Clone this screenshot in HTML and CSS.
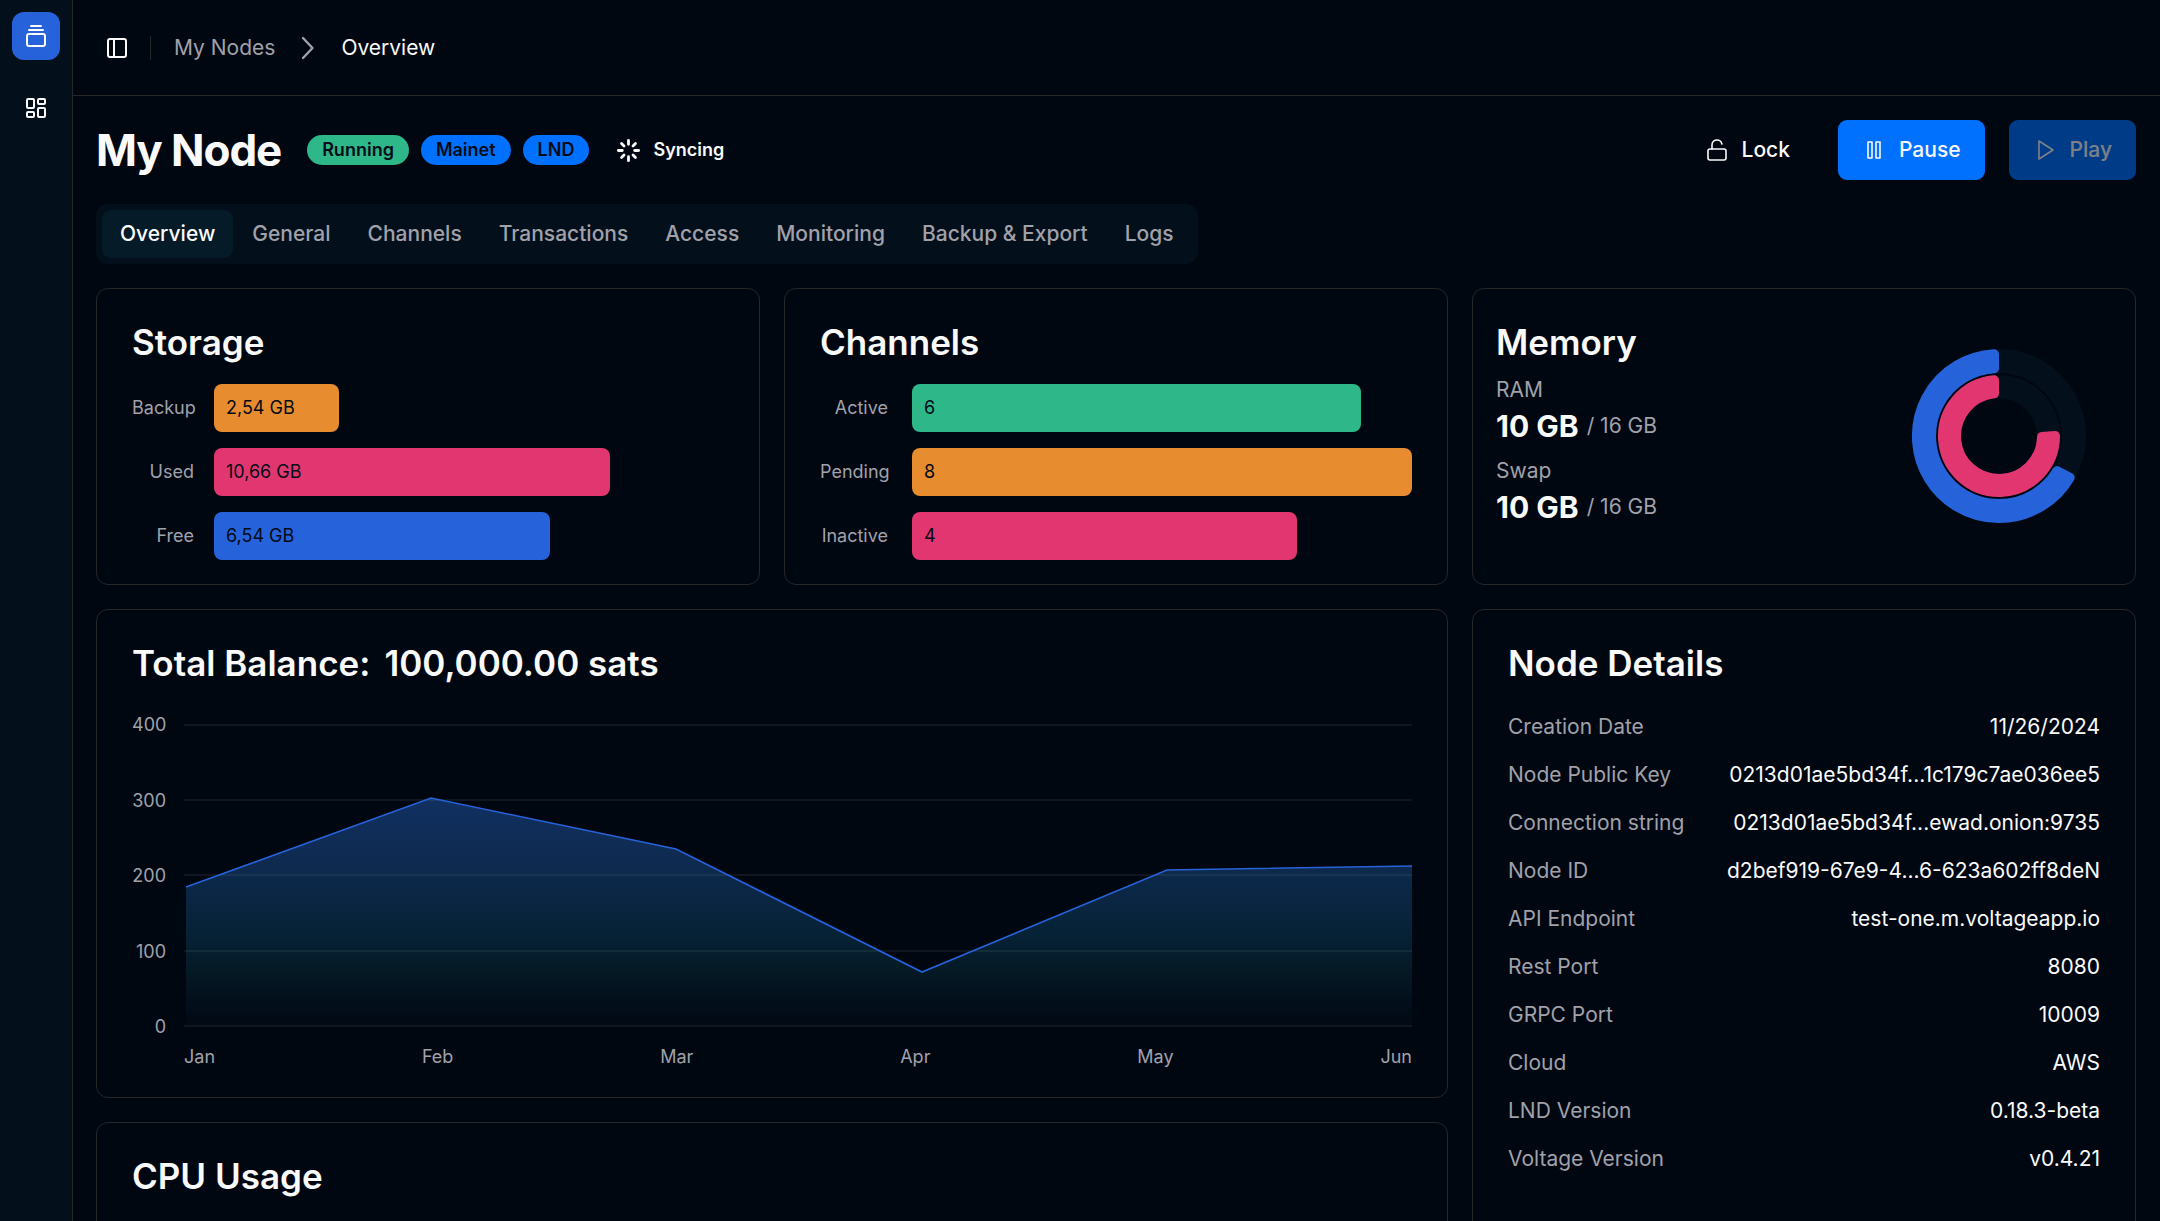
FILE: index.html
```html
<!DOCTYPE html>
<html lang="en">
<head>
<meta charset="utf-8">
<meta name="viewport" content="width=device-width, initial-scale=1">
<title>My Node – Overview</title>
<link rel="stylesheet" href="styles.css">
</head>
<body>
<div class="app">
  <aside class="sidebar">
    <a class="brand" href="#" aria-label="Home">
      <svg class="icon" viewBox="0 0 24 24"><path d="M7 2h10M5 6h14"/><rect width="18" height="12" x="3" y="10" rx="2"/></svg>
    </a>
    <nav class="side-nav">
      <a class="side-link" href="#" aria-label="Dashboard">
        <svg class="icon" viewBox="0 0 24 24"><rect width="7" height="9" x="3" y="3" rx="1"/><rect width="7" height="5" x="14" y="3" rx="1"/><rect width="7" height="9" x="14" y="12" rx="1"/><rect width="7" height="5" x="3" y="16" rx="1"/></svg>
      </a>
    </nav>
  </aside>

  <div class="page">
    <header class="topbar">
      <button class="icon-button" type="button" aria-label="Toggle sidebar">
        <svg class="icon" viewBox="0 0 24 24"><rect width="18" height="18" x="3" y="3" rx="2"/><path d="M9 3v18"/></svg>
      </button>
      <span class="divider"></span>
      <nav class="breadcrumb" aria-label="Breadcrumb">
        <a class="crumb" href="#">My Nodes</a>
        <svg class="icon crumb-arrow" viewBox="0 0 24 24"><path d="M7 2 16.500 12 7 22"/></svg>
        <span class="crumb crumb-current">Overview</span>
      </nav>
    </header>

    <main class="content">
      <div class="title-row">
        <h1 class="title">My Node</h1>
        <div class="badges">
          <span class="badge badge-green">Running</span>
          <span class="badge">Mainet</span>
          <span class="badge">LND</span>
        </div>
        <div class="sync">
          <svg class="icon sync-icon" viewBox="0 0 24 24"><path d="M12 3v3.500M16 8l2.200-2.200M17.500 12h3.500M16 16l2.200 2.200M12 17.500v3.500M5.800 18.200 8 16M3 12h3.500M5.800 5.800 8 8"/></svg>
          <span>Syncing</span>
        </div>
        <div class="actions">
          <button class="button button-ghost" type="button">
            <svg class="icon icon-thin" viewBox="0 0 24 24"><rect width="18" height="11" x="3" y="11" rx="2"/><path d="M7 11V7a5 5 0 0 1 9.900-1"/></svg>
            Lock
          </button>
          <button class="button" type="button">
            <svg class="icon icon-thin" viewBox="0 0 24 24"><rect width="4" height="16" x="6" y="4"/><rect width="4" height="16" x="14" y="4"/></svg>
            Pause
          </button>
          <button class="button" type="button" disabled>
            <svg class="icon icon-thin" viewBox="0 0 24 24"><path d="M6 3l14 9-14 9z"/></svg>
            Play
          </button>
        </div>
      </div>

      <div class="tabs" role="tablist">
        <button class="tab" type="button" role="tab" aria-selected="true">Overview</button>
        <button class="tab" type="button" role="tab" aria-selected="false">General</button>
        <button class="tab" type="button" role="tab" aria-selected="false">Channels</button>
        <button class="tab" type="button" role="tab" aria-selected="false">Transactions</button>
        <button class="tab" type="button" role="tab" aria-selected="false">Access</button>
        <button class="tab" type="button" role="tab" aria-selected="false">Monitoring</button>
        <button class="tab" type="button" role="tab" aria-selected="false">Backup &amp; Export</button>
        <button class="tab" type="button" role="tab" aria-selected="false">Logs</button>
      </div>

      <div class="cards">
        <section class="card">
          <h2 class="card-title">Storage</h2>
          <div class="bars bars-storage">
            <span class="bar-label">Backup</span>
            <div class="track"><div class="bar orange" style="width:24.500%">2,54 GB</div></div>
            <span class="bar-label">Used</span>
            <div class="track"><div class="bar pink" style="width:77.600%">10,66 GB</div></div>
            <span class="bar-label">Free</span>
            <div class="track"><div class="bar blue" style="width:65.800%">6,54 GB</div></div>
          </div>
        </section>

        <section class="card">
          <h2 class="card-title">Channels</h2>
          <div class="bars bars-channels">
            <span class="bar-label">Active</span>
            <div class="track"><div class="bar green" style="width:89.800%">6</div></div>
            <span class="bar-label">Pending</span>
            <div class="track"><div class="bar orange" style="width:100%">8</div></div>
            <span class="bar-label">Inactive</span>
            <div class="track"><div class="bar pink" style="width:77%">4</div></div>
          </div>
        </section>

        <section class="card card-memory">
          <div class="memory-info">
            <h2 class="card-title">Memory</h2>
            <div class="memory-item">
              <div class="memory-label">RAM</div>
              <div class="memory-value"><strong>10 GB</strong><span>/ 16 GB</span></div>
            </div>
            <div class="memory-item">
              <div class="memory-label">Swap</div>
              <div class="memory-value"><strong>10 GB</strong><span>/ 16 GB</span></div>
            </div>
          </div>
          <svg class="donut" viewBox="-112 -112 224 224" role="img" aria-label="Memory usage">
            <circle class="ring" r="75"/>
            <circle class="ring" r="49.500"/>
            <path class="arc arc-ram" d="M-5 -81.800A82 82 0 1 0 70.600 41.600L58.200 35.200A68 68 0 1 1 -5 -67.800Z"/>
            <path class="arc arc-swap" d="M-5 -55.800A56 56 0 1 0 56 0L43 1.100A43 43 0 1 1 -5 -42.700Z"/>
          </svg>
        </section>

        <section class="card card-wide">
          <h2 class="card-title balance"><span>Total Balance:</span><span>100,000.00 sats</span></h2>
          <div class="chart">
            <div class="y-axis"><span>400</span><span>300</span><span>200</span><span>100</span><span>0</span></div>
            <svg class="plot" viewBox="0 0 1228 304" preserveAspectRatio="none" role="img" aria-label="Balance by month">
              <defs>
                <linearGradient id="area" x1="0" y1="0" x2="0" y2="1">
                  <stop offset="0" stop-color="#113061"/>
                  <stop offset=".25" stop-color="#0f2b52"/>
                  <stop offset=".6" stop-color="#062236"/>
                  <stop offset=".75" stop-color="#051a26"/>
                  <stop offset=".88" stop-color="#03101c"/>
                  <stop offset="1" stop-color="#010914"/>
                </linearGradient>
              </defs>
              <path fill="url(#area)" d="M2 163 247 74 492 125 738 248 983 146 1228 142V302H2Z"/>
              <path class="grid-line" d="M0 1H1228M0 76H1228M0 151H1228M0 227H1228M0 302H1228"/>
              <path class="line" d="M2 163 247 74 492 125 738 248 983 146 1228 142"/>
            </svg>
            <div class="x-axis"><span>Jan</span><span>Feb</span><span>Mar</span><span>Apr</span><span>May</span><span>Jun</span></div>
          </div>
        </section>

        <section class="card card-details">
          <h2 class="card-title">Node Details</h2>
          <dl class="details">
            <div class="detail"><dt>Creation Date</dt><dd>11/26/2024</dd></div>
            <div class="detail"><dt>Node Public Key</dt><dd>0213d01ae5bd34f...1c179c7ae036ee5</dd></div>
            <div class="detail"><dt>Connection string</dt><dd>0213d01ae5bd34f...ewad.onion:9735</dd></div>
            <div class="detail"><dt>Node ID</dt><dd>d2bef919-67e9-4...6-623a602ff8deN</dd></div>
            <div class="detail"><dt>API Endpoint</dt><dd>test-one.m.voltageapp.io</dd></div>
            <div class="detail"><dt>Rest Port</dt><dd>8080</dd></div>
            <div class="detail"><dt>GRPC Port</dt><dd>10009</dd></div>
            <div class="detail"><dt>Cloud</dt><dd>AWS</dd></div>
            <div class="detail"><dt>LND Version</dt><dd>0.18.3-beta</dd></div>
            <div class="detail"><dt>Voltage Version</dt><dd>v0.4.21</dd></div>
          </dl>
        </section>

        <section class="card card-wide card-cpu">
          <h2 class="card-title">CPU Usage</h2>
        </section>
      </div>
    </main>
  </div>
</div>
</body>
</html>
```
FILE: styles.css
```css
:root {
  --bg: #000711;
  --panel: #03101c;
  --active: #051b27;
  --border: #27272a;
  --text: #fafafa;
  --muted: #a1a1aa;
  --primary: #0070ff;
  --blue: #2662d9;
  --green: #2eb88a;
  --orange: #e88c30;
  --pink: #e23670;
}

* { box-sizing: border-box; }

body {
  margin: 0;
  background: var(--bg);
  color: var(--text);
  font: 400 21px/30px Inter, "Liberation Sans", sans-serif;
}

h1, h2, dl, dd { margin: 0; }
a { color: inherit; text-decoration: none; }
button { font: inherit; color: inherit; border: 0; background: none; cursor: pointer; }

.icon {
  width: 24px;
  height: 24px;
  flex: none;
  fill: none;
  stroke: currentColor;
  stroke-width: 2;
  stroke-linecap: round;
  stroke-linejoin: round;
}
.icon-thin { stroke-width: 1.6; }

.app { display: flex; height: 100vh; }

.sidebar {
  flex: none;
  width: 73px;
  padding: 12px;
  background: var(--panel);
  border-right: 1px solid var(--border);
}
.brand, .side-link {
  display: flex;
  align-items: center;
  justify-content: center;
  width: 48px;
  height: 48px;
  border-radius: 12px;
}
.brand { background: var(--blue); }
.side-nav { margin-top: 24px; }

.page { flex: 1; min-width: 0; display: flex; flex-direction: column; }

.topbar {
  flex: none;
  display: flex;
  align-items: center;
  height: 96px;
  padding: 0 24px;
  border-bottom: 1px solid var(--border);
}
.icon-button { display: flex; padding: 8px; }
.divider { width: 1px; height: 24px; margin: 0 23px 0 13px; background: var(--border); }
.breadcrumb { display: flex; align-items: center; gap: 21px; line-height: 32px; }
.crumb { color: var(--muted); }
.crumb-arrow { color: var(--muted); stroke-width: 2.4; }
.crumb-current { color: var(--text); }

.content {
  flex: 1;
  min-height: 0;
  overflow-y: auto;
  scrollbar-width: none;
  padding: 24px 24px 24px 23px;
}

.title-row { display: flex; align-items: center; height: 60px; }
.title { font-size: 44px; line-height: 60px; font-weight: 700; letter-spacing: -0.025em; }
.badges { display: flex; gap: 12px; margin-left: 26px; }
.badge {
  padding: 0 15px;
  border-radius: 15px;
  background: var(--primary);
  color: #020b16;
  font-size: 18px;
  line-height: 30px;
  font-weight: 600;
}
.badge-green { background: var(--green); }
.sync {
  display: flex;
  align-items: center;
  gap: 11px;
  margin-left: 26px;
  font-size: 18px;
  font-weight: 600;
}
.sync-icon { width: 27px; height: 27px; stroke-width: 2.5; }
.actions { display: flex; gap: 24px; margin-left: auto; }
.button {
  display: flex;
  align-items: center;
  gap: 13px;
  height: 60px;
  padding: 0 24px;
  border-radius: 9px;
  background: var(--primary);
  font-weight: 500;
}
.button-ghost { background: none; }
.button:disabled { opacity: .5; cursor: default; }

.tabs {
  display: inline-flex;
  gap: 1px;
  margin: 24px 0;
  padding: 6px;
  border-radius: 12px;
  background: var(--panel);
  vertical-align: top;
}
.tab {
  height: 48px;
  padding: 0 18px;
  border-radius: 9px;
  color: var(--muted);
  font-weight: 500;
}
.tab[aria-selected="true"] { background: var(--active); color: var(--text); }

.cards {
  display: grid;
  grid-template-columns: repeat(3, minmax(0, 1fr));
  gap: 24px;
}
.card {
  padding: 35px 35px 24px;
  border: 1px solid var(--border);
  border-radius: 12px;
}
.card-title { font-size: 35px; line-height: 36px; font-weight: 600; }
.card-wide { grid-column: span 2; }
.card-details { grid-row: span 2; }
.card-cpu { min-height: 300px; }

.bars { display: grid; row-gap: 16px; margin-top: 24px; align-items: center; }
.bars-storage { grid-template-columns: 62px 1fr; column-gap: 20px; }
.bars-channels { grid-template-columns: 68px 1fr; column-gap: 24px; }
.bar-label { color: var(--muted); font-size: 18px; text-align: right; }
.bar {
  padding-left: 12px;
  border-radius: 8px;
  color: #020b16;
  font-size: 18px;
  line-height: 48px;
}
.orange { background: var(--orange); }
.pink { background: var(--pink); }
.blue { background: var(--blue); }
.green { background: var(--green); }

.card-memory { display: flex; justify-content: space-between; align-items: flex-start; padding-left: 23px; padding-right: 24px; }
.memory-info { display: flex; flex-direction: column; gap: 9px; }
.memory-info .card-title { margin-bottom: 6px; }
.memory-label, .memory-value { color: var(--muted); }
.memory-value { display: flex; align-items: center; gap: 8px; height: 42px; }
.memory-value strong { color: var(--text); font-size: 30px; font-weight: 700; }
.donut { width: 224px; height: 224px; }
.ring { fill: none; stroke: var(--panel); stroke-width: 24; }
.ring + .ring { stroke-width: 23; }
.arc { stroke-width: 10; stroke-linejoin: round; }
.arc-ram { fill: var(--blue); stroke: var(--blue); }
.arc-swap { fill: var(--pink); stroke: var(--pink); }

.balance { display: flex; gap: 14px; }
.chart {
  display: grid;
  grid-template-columns: 34px 1fr;
  column-gap: 18px;
  margin-top: 43px;
  color: var(--muted);
  font-size: 18px;
}
.y-axis {
  display: flex;
  flex-direction: column;
  justify-content: space-between;
  margin: -14px 0;
  text-align: right;
}
.plot { width: 100%; height: 304px; }
.x-axis { grid-column: 2; display: flex; justify-content: space-between; margin-top: 14px; padding-bottom: 1px; }
.grid-line { stroke: #9aa0a8; stroke-opacity: .2; fill: none; vector-effect: non-scaling-stroke; }
.line { stroke: var(--blue); stroke-width: 1.6; fill: none; vector-effect: non-scaling-stroke; }

.details { margin-top: 22px; }
.detail { display: flex; justify-content: space-between; line-height: 48px; }
.detail dt { color: var(--muted); }
```
